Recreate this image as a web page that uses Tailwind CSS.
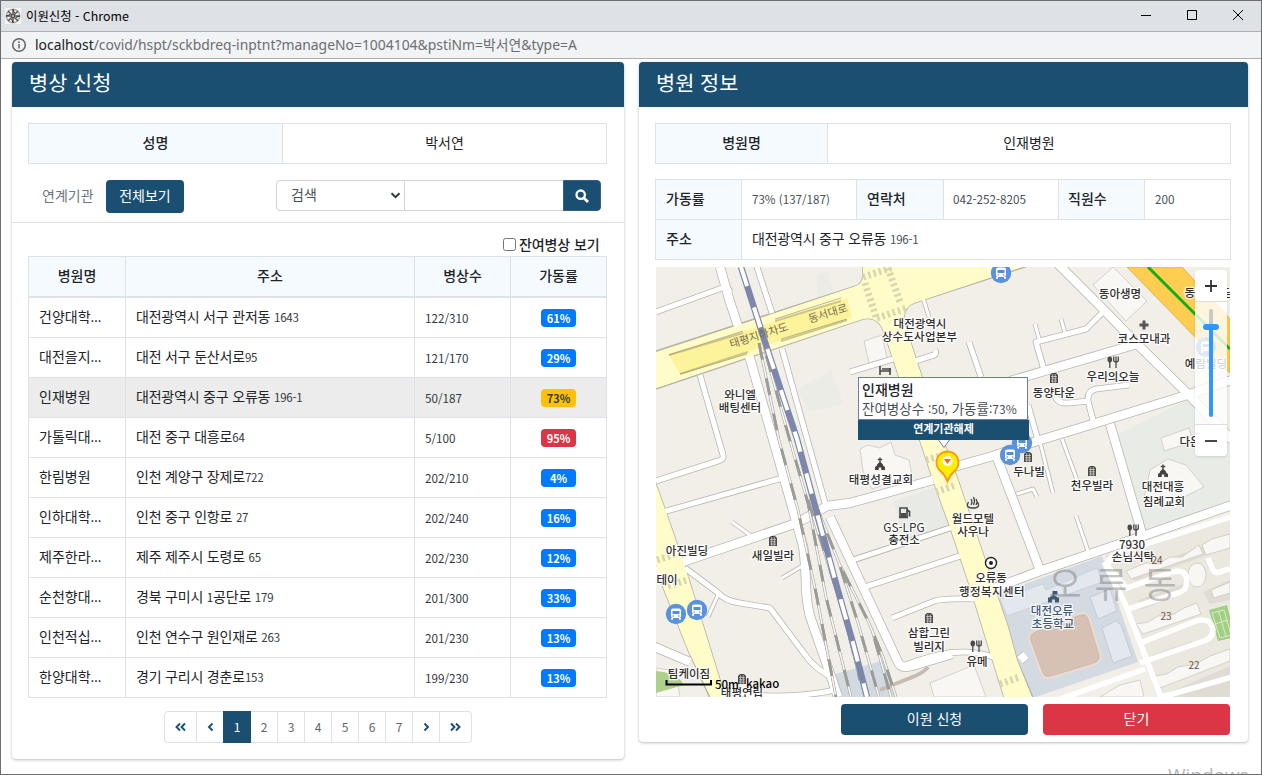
<!DOCTYPE html>
<html lang="ko">
<head>
<meta charset="utf-8">
<title>이원신청</title>
<script src="https://cdn.jsdelivr.net/npm/@tailwindcss/browser@4"></script>
</head>
<body class="w-[1262px] h-[775px] overflow-hidden bg-white font-['Noto_Sans_CJK_KR',sans-serif] text-[14px] leading-5 text-[#212529]">
<div class="relative flex h-[775px] w-[1262px] flex-col overflow-hidden border border-[#6d6d70]">
  <header class="flex h-[31px] shrink-0 items-center border-b border-[#adafb2] bg-[#dee1e6] pl-[4px]">
    <svg class="size-4 bg-[#f5f5f5]" viewBox="0 0 16 16" fill="none" stroke="#555"><circle cx="8" cy="8" r="6.700" stroke="#aaa" stroke-width="1.600"/><path d="M8 1v14M1 8h14M3 3l10 10M13 3 3 13" stroke-width="1.500"/><path d="M8 1.500 9.500 5M8 14.500 6.500 11M1.500 8 5 6.500M14.500 8 11 9.500" stroke="#333"/><circle cx="8" cy="8" r="1.500" fill="#ddd" stroke="#444"/></svg>
    <span class="ml-[5px] text-[12.400px] text-black">이원신청 - Chrome</span>
    <div class="ml-auto flex w-[126px] items-center">
      <svg class="h-[30px] w-[126px]" viewBox="1135 1 126 30" fill="none" stroke="#000"><path d="M1141 15.500h10"/><path d="M1187.500 10.500h9v9h-9z"/><path d="m1233 10 10 10M1243 10l-10 10"/></svg>
    </div>
  </header>
  <div class="flex h-[27px] shrink-0 items-center border-b border-[#acaeb0] bg-[#f1f3f4] pl-[10px]">
    <svg class="size-4" viewBox="0 0 16 16" fill="none" stroke="#5f6368" stroke-width="1.500"><circle cx="8" cy="8" r="6.300"/><path d="M8 7v4.500M8 4.300v1.600"/></svg>
    <span class="ml-[8px] whitespace-nowrap font-['Noto_Sans','Noto_Sans_CJK_KR',sans-serif] text-[13.900px] text-[#6b6e72]"><span class="text-[#202124]">localhost</span>/covid/hspt/sckbdreq-inptnt?manageNo=1004104&amp;pstiNm=박서연&amp;type=A</span>
  </div>

  <main class="flex items-start gap-[15px] pt-[3px] pl-[11px]">
    <section class="h-[697px] w-[612px] rounded bg-white shadow-[0_0_1px_rgba(0,0,0,0.13),0_1px_3px_rgba(0,0,0,0.25)]">
      <h1 class="flex h-[45px] items-center rounded-t bg-[#1b4f72] pb-[5px] pl-[17px] text-[20.800px] text-white">병상 신청</h1>
      <div class="mx-4 mt-4 grid h-[41px] w-[579px] grid-cols-[254px_1fr] border border-[#dee2e6] text-center leading-[36px]">
        <div class="border-r border-[#dee2e6] bg-[#f4fafd] font-medium">성명</div>
        <div>박서연</div>
      </div>
      <div class="mt-4 flex h-[43px] items-start border-b border-[#dee2e6] pl-[30px]">
        <span class="mt-[5px] w-16 text-[#6c757d]">연계기관</span>
        <button class="h-[33px] w-[78px] rounded bg-[#1b4f72] pb-[3px] text-white">전체보기</button>
        <div class="ml-[92px] flex h-[31px]">
          <div class="flex w-[129px] items-center justify-between rounded-l border border-[#ced4da] pr-[3px] pl-[14px] pb-[3px] text-[#495057]">검색
            <svg class="mt-[2px] h-[7px] w-[11px]" viewBox="0 0 11 7" fill="none" stroke="#343a40" stroke-width="2"><path d="m1.500 1.200 4 4 4-4"/></svg></div>
          <div class="w-[158px] border-y border-[#ced4da]"></div>
          <button class="flex w-[38px] items-center justify-center rounded-r border border-[#335f85] bg-[#1b4f72]"><svg class="size-[14px]" viewBox="0 0 14 14" fill="none" stroke="#fff" stroke-width="2.300"><circle cx="5.700" cy="5.700" r="4.200"/><path d="m8.700 8.700 4.300 4.300" stroke-width="2.800"/></svg></button>
        </div>
      </div>
      <div class="flex h-[33px] items-center justify-end gap-[3px] pt-[9px] pr-[25px] font-medium"><span class="size-[13px] rounded-[2.500px] border border-[#767676]"></span><span class="w-[80px] whitespace-nowrap tracking-[-0.100px]">잔여병상 보기</span></div>
      <div id="grid" class="mx-4 w-[579px] border-l border-t border-[#dee2e6]">
        <div class="grid h-[41px] grid-cols-[97px_289px_96px_96px] text-center font-medium leading-[37px]">
          <div class="border-r border-b-2 border-[#dee2e6] bg-[#f4fafd]">병원명</div><div class="border-r border-b-2 border-[#dee2e6] bg-[#f4fafd]">주소</div><div class="border-r border-b-2 border-[#dee2e6] bg-[#f4fafd]">병상수</div><div class="border-r border-b-2 border-[#dee2e6] bg-[#f4fafd]">가동률</div>
        </div>
      </div>
      <nav class="mt-[13px] ml-[152px] flex h-[32px] w-[308px] text-center text-[12px] leading-[31px] text-[#5c6670]">
        <span class="flex w-[33px] items-center justify-center rounded-l border border-[#dee2e6]"><svg class="size-[11px]" viewBox="0 0 11 11" fill="none" stroke="#1b4f72" stroke-width="1.900"><path d="m5 1.500-3.500 3.500 3.500 3.500M10 1.500 6.500 5l3.500 3.500"/></svg></span>
        <span class="flex w-[26px] items-center justify-center border-y border-[#dee2e6]"><svg class="size-[11px]" viewBox="0 0 11 11" fill="none" stroke="#1b4f72" stroke-width="1.900"><path d="M7.500 1.500 4 5l3.500 3.500"/></svg></span>
        <span class="w-[28px] bg-[#1b4f72] text-white">1</span>
        <span class="w-[27px] border-y border-r border-[#dee2e6] leading-[29px]">2</span><span class="w-[27px] border-y border-r border-[#dee2e6] leading-[29px]">3</span><span class="w-[27px] border-y border-r border-[#dee2e6] leading-[29px]">4</span><span class="w-[27px] border-y border-r border-[#dee2e6] leading-[29px]">5</span><span class="w-[27px] border-y border-r border-[#dee2e6] leading-[29px]">6</span><span class="w-[27px] border-y border-r border-[#dee2e6] leading-[29px]">7</span>
        <span class="flex w-[27px] items-center justify-center border-y border-r border-[#dee2e6]"><svg class="size-[11px]" viewBox="0 0 11 11" fill="none" stroke="#1b4f72" stroke-width="1.900"><path d="M3.500 1.500 7 5 3.500 8.500"/></svg></span>
        <span class="flex w-[32px] items-center justify-center rounded-r border border-l-0 border-[#dee2e6]"><svg class="size-[11px]" viewBox="0 0 11 11" fill="none" stroke="#1b4f72" stroke-width="1.900"><path d="M1 1.500 4.500 5 1 8.500M6 1.500 9.500 5 6 8.500"/></svg></span>
      </nav>
    </section>

    <section class="h-[680px] w-[609px] rounded bg-white shadow-[0_0_1px_rgba(0,0,0,0.13),0_1px_3px_rgba(0,0,0,0.25)]">
      <h1 class="flex h-[45px] items-center rounded-t bg-[#1b4f72] pb-[5px] pl-[17px] text-[20.800px] text-white">병원 정보</h1>
      <div class="mx-4 mt-4 grid h-[41px] w-[576px] grid-cols-[172px_1fr] border border-[#dee2e6] text-center leading-[36px]">
        <div class="border-r border-[#dee2e6] bg-[#f4fafd] font-medium">병원명</div>
        <div>인재병원</div>
      </div>
      <div class="mx-4 mt-[15px] w-[576px] border-l border-t border-[#dee2e6] leading-[36px]">
        <div class="grid h-[40px] grid-cols-[86px_115px_87px_115px_86px_86px]">
          <div class="border-r border-b border-[#dee2e6] bg-[#f4fafd] pl-[10px] font-medium">가동률</div><div class="border-r border-b border-[#dee2e6] pl-[10px] text-[11.600px] leading-[38px] text-[#495057]">73% (137/187)</div>
          <div class="border-r border-b border-[#dee2e6] bg-[#f4fafd] pl-[10px] font-medium">연락처</div><div class="border-r border-b border-[#dee2e6] pl-[9px] text-[11.700px] leading-[38px] text-[#495057]">042-252-8205</div>
          <div class="border-r border-b border-[#dee2e6] bg-[#f4fafd] pl-[9px] font-medium">직원수</div><div class="border-r border-b border-[#dee2e6] pl-[10px] text-[11.700px] leading-[38px] text-[#495057]">200</div>
        </div>
        <div class="grid h-[40px] grid-cols-[86px_489px]">
          <div class="border-r border-b border-[#dee2e6] bg-[#f4fafd] pl-[10px] font-medium">주소</div><div class="border-r border-b border-[#dee2e6] pl-[10px] tracking-[-0.200px]">대전광역시 중구 오류동 <span class="text-[11.500px] text-[#495057]">196-1</span></div>
        </div>
      </div>

      <div class="relative mt-[7px] ml-[17px] h-[430px] w-[574px] overflow-hidden bg-[#f2efe9]">
        <svg class="block h-[430px] w-[574px]" viewBox="656 267 574 430">
          <defs>
            <g id="bus"><circle r="10.200" fill="#5b92de"/><rect x="-5" y="-5.500" width="10" height="9.500" rx="2" fill="#fff"/><path d="M-3.500-3h7v3h-7z" fill="#528cdb"/><path d="M-4 4v1.700M4 4v1.700" stroke="#fff" stroke-width="2"/><circle cx="-2.800" cy="2" r=".8" fill="#528cdb"/><circle cx="2.800" cy="2" r=".8" fill="#528cdb"/></g>
            <g id="bld"><path d="M-4 5v-8l2-2h4l2 2v8z" fill="#4a4a4a"/><path d="M-3-1.500h6M-3 .8h6M-3 3.100h6M-1.300-4v9M1.300-4v9" stroke="#f2efe9" stroke-width=".6"/></g>
            <g id="eat"><ellipse cx="-3.200" cy="-2.500" rx="2.300" ry="3" fill="#4a4a4a"/><path d="M-3.200 0v6M3 0v6M.7-5.500V-2q0 2 2.300 2t2.300-2v-3.500M3-5.500V0" fill="none" stroke="#4a4a4a" stroke-width="1.300"/></g>
            <g id="chu"><path d="M0-6.500v5M-2.200-4.500h4.400" stroke="#444" stroke-width="1.300"/><path d="m0-2.500 3 3v1l2 1.500v3H1.200V3.500h-2.400V6H-5V3l2-1.500v-1z" fill="#444"/></g>
            <path id="w3" d="M923 298 929 317M1040 442 1053 493M1062 439 1077 480M1017 494 1033 489 1037 497M1076 516 1088 551M718 595 708 617M732 522 750 535M782 578 804 565M1200 284 1212 271M1035 324 1040 342M1061 319 1065 333"/>
            <path id="w5" d="M656 312 722 288Q728 286 730 292M700 375 723 455Q724 460 718 461L656 481M663 512 786 477M850 372 893 359M912 362 934 355Q937 354 935 350M969 342 981 377M1028 405 1038 440M1044 370 1036 342 1086 329 1103 312M1055 396Q1058 404 1068 403L1089 401M1094 424 1088 401Q1087 391 1096 389L1129 385M853 560 956 526M865 587 960 556M892 618 932 602Q940 598 975 599M685 568 717 592Q725 601 740 603L770 608 803 652Q815 670 834 678M940 655Q965 648 994 657M757 267 772 313M782 349 825 503M720 690Q780 702 835 690M900 667Q930 655 955 652"/>
            <path id="w8" d="M720 267 730 302 740 332M749 355 793 510 803 546Q805 556 806 587 807 610 812 622L838 697M830 517 898 662Q901 669 912 666L952 654M650 573 797 523 827 506 850 503 933 480M950 468 993 456 1037 441 1093 424 1187 395 1232 380M1058 264 1103 309 1137 344 1187 393 1232 440M1010 381 1137 344M1110 424 1143 537M996 455 1040 570M990 590 1040 571 1140 537 1232 505M650 645 690 662M1020 660 1026 655"/>
          </defs>
          <!-- land areas -->
          <path d="m817 275 10-5 8 26-18 4zM797 390l34-20 12 34-34 8z" fill="#ebece6"/>
          <path d="m893 501 47-15 12 38-48 18z" fill="#e8eae6"/>
          <path d="m1117 435 70-35 43 42v62l-85 30z" fill="#e9ebe7"/>
          <path d="m1105 555 125-38v180h-68z" fill="#ebe8df"/>
          <path d="m1130 572 100-35v10l-96 34zM1138 600l45-16 4 8-46 18zM1152 655l40-14 3 6-40 14zM1170 692l60-26v31h-60zM1203 592l27-12v20l-20 4z" fill="#e0dcd3"/>
          <path d="m995 595 107-39 36 106-105 36-16-26z" fill="#d3dae2"/>
          <path d="m1000 599 43-15 3 6 51-22 5 14-95 34z" fill="#e2e8ed" stroke="#c5ced8" stroke-width=".8"/>
          <path d="m1090 597 20-8 7 22-19 8zM1102 628l14-7 5 4 11 31-19 7z" fill="#e2e8ed" stroke="#c3ccd5"/>
          <path d="M1035 632 1080 615Q1086 613 1088 619L1099 655Q1100 661 1094 663L1051 676Q1045 678 1043 673L1031 641Q1029 635 1035 632z" fill="#d6c1b4" stroke="#eadcd3" stroke-width="5"/>
          <path d="M1035 632 1080 615Q1086 613 1088 619L1099 655Q1100 661 1094 663L1051 676Q1045 678 1043 673L1031 641Q1029 635 1035 632z" fill="#d6c1b4" stroke="#cdb7ab" stroke-width=".8"/>
          <g fill="#f8f7f4" stroke="#d0cdc6" stroke-width=".9"><path d="m1093 285 20-18 34 34-21 20zM864 341l18-6 5 23-18 5zM860 449l8-4 12 3 11-6 4 13 14 5 3 15-40 14-9-18zM1161 438l28-10 4 14-29 9zM1150 470l18-11 18 6 18 22-40 20-20-8zM1126 571l20-8 12 1 12-7 12 0 17-12 4 9-72 25zM1136 624l12-2 10-6 14-1 12-7 13-5 4 11-58 20zM1155 676l12-2 11-7 18-3 14-8 20-7v12l-70 27zM1202 545l10-6 18-5v14l-24 7zM1211 590l19-8v11l-16 5zM656 668l20 3 4 26h-24zM930 683l44-18 12 32h-52zM1100 697l20-12 20-5 4 17z"/><ellipse cx="1197" cy="575" rx="9" ry="12"/></g>
          <path d="m656 671 8 1q16 4 20 13l-28 8z" fill="#add18b"/>
          <path d="m1209 610 18-5 8 32-17 4z" fill="#a2cf83"/><path d="m1212 613 12-3 7 25-11 3zM1215 624l13-4M1219 612l7 25" fill="none" stroke="#d8ecc9"/>
          <path d="m835 674 50-14 12 37h-58z" fill="#d2d9e0"/><path d="m880 690 30-12q14-5 18-11" fill="none" stroke="#c8bbb1" stroke-width="4"/>
          <!-- highways -->
          <path d="M1127 267h55l48 52v54z" fill="#ffcd4f" stroke="#d9a64b" stroke-width=".8"/>
          <path d="m1148 267 82 82" stroke="#14ad1c" stroke-width="3"/>
          <!-- apartment lanes -->
          <path d="M1108 567 1127 588 1172 572Q1190 568 1186 586 1185 591 1178 593L1125 610M1108 567Q1108 553 1130 549L1230 517M1140 643 1196 621Q1211 617 1213 630 1213 638 1204 641L1140 663M1060 699 1145 669M1162 697 1232 677M1208 558 1213 570Q1216 575 1225 570L1230 569M1104 562 1125 603 1143 650 1162 700" fill="none" stroke="#fff" stroke-width="5.500"/>
          <!-- street casings and fills -->
          <g fill="none" stroke="#b9b7b2" stroke-linejoin="round"><use href="#w3" stroke-width="4.600"/><use href="#w5" stroke-width="6.600"/><use href="#w8" stroke-width="10"/></g>
          <g fill="#fffcc9" stroke="#b5b3a4" stroke-width="1.600"><path d="M650 353 856 286Q863 283 863 275V262H1040L914 303Q901 308 905 325L917 362 945 445 958 480 980 545 1008 627 1017 660 1034 700H1005L990 652 970 587 950 527 933 480 893 359 884 332Q878 316 863 319L650 391z"/><path d="M650 470 657 487 666 512 685 567 720 680 727 700H711L688 650 663 587 650 545z"/></g>
          <g fill="none" stroke="#fff" stroke-linejoin="round"><use href="#w3" stroke-width="3"/><use href="#w5" stroke-width="5"/><use href="#w8" stroke-width="8.400"/></g>
          <path d="M656 353 856 286Q863 283 863 275V262H1038L914 303Q901 308 905 325L917 362 945 445 958 480 980 545 1008 627 1017 660 1033 700H1005L990 652 970 587 950 527 933 480 893 359 884 332Q878 316 863 319L650 390z" fill="#fffcc9"/>
          <path d="M650 472 657 487 666 512 685 567 720 680 726 700H712L688 650 663 587 650 545z" fill="#fffcc9"/>
          <path d="m669 355 178-57 5 19-172 57z" fill="#fdf39b"/><path d="m669 355 74-22M775 321l66-20M680 374l68-22M781 341l66-21" stroke="#d0c686" stroke-width="2.200"/><path d="m669 355 74-24M775 319l66-21M680 374l67-20M781 339l66-20" stroke="#aaa37c" stroke-width=".8"/>
          <g fill="none" stroke="#d9d5ae" stroke-width="7" stroke-dasharray="2.500 3"><path d="m863 277 28-9M865 283l12 37M877 318l30-10M888 268l12 34M926 460l14-4M936 492l20-7M1000 684l20-7M657 560l22-7M668 586l22-7"/></g>
          <!-- railway side tracks -->
          <g fill="none">
            <path id="tk" d="M759 343 779 440 798 510 816 593 836 697M764 347 786 427 808 503 826 597 851 697M814 500 839 563 858 623 879 697M839 563 869 623 883 657 896 697M808 500 830 570 846 623 860 680M872 630 891 697" stroke="#b8b7b0" stroke-width="2.600"/>
            <use href="#tk"/>
            <path d="M759 343 779 440 798 510 816 593 836 697M764 347 786 427 808 503 826 597 851 697M814 500 839 563 858 623 879 697M839 563 869 623 883 657 896 697M808 500 830 570 846 623 860 680M872 630 891 697" stroke="#fff" stroke-width="1.200"/>
            <path d="M759 343 779 440 798 510 816 593 836 697M814 500 839 563 858 623 879 697M808 500 830 570 846 623 860 680" stroke="#9a9c97" stroke-width="2.800" stroke-dasharray="17 19"/>
            <path d="M764 347 786 427 808 503 826 597 851 697M839 563 869 623 883 657 896 697M872 630 891 697" stroke="#9a9c97" stroke-width="2.800" stroke-dasharray="17 19" stroke-dashoffset="-9"/>
          </g>
          <path d="M741 267 765 342 797 439 818 517 837 587 853 643 867 697" fill="none" stroke="#7d87ac" stroke-width="6.400"/>
          <path d="M741 267 765 342 797 439 818 517 837 587 853 643 867 697" fill="none" stroke="#fff" stroke-width="4" stroke-dasharray="21 22.500" stroke-dashoffset="1"/>
          <!-- symbols -->
          <use href="#bus" x="1001" y="273"/><use href="#bus" x="1022" y="443"/><use href="#bus" x="1010" y="455"/><use href="#bus" x="676" y="614"/><use href="#bus" x="697" y="610"/><use href="#bus" x="1206" y="347"/>
          <use href="#bld" x="1054" y="378"/><use href="#bld" x="1028" y="457"/><use href="#bld" x="1092" y="471"/><use href="#bld" x="929" y="618"/><use href="#bld" x="773" y="541"/><use href="#bld" x="742" y="679"/>
          <use href="#eat" x="1113" y="362"/><use href="#eat" x="1133" y="530"/><use href="#eat" x="976" y="646"/>
          <use href="#chu" x="880" y="464"/><use href="#chu" x="1163" y="471"/>
          <path d="M1144 320.500v9M1139.500 325h9" stroke="#555" stroke-width="3"/>
          <path d="M880 366v9M880 371h11M890 368v7M882 369h9" stroke="#4a4a4a" stroke-width="1.600"/>
          <path d="M900 508h7v9h-7zM899 517.500h9M907 510l2.500 1.500v5" fill="none" stroke="#4a4a4a" stroke-width="1.700"/><path d="M901 513h5v4h-5z" fill="#4a4a4a"/>
          <path d="M968.500 502q-3.500 6 4.500 6t4.500-6M971 505q2-3 0-6M973.500 505q2-4 0-8M976 505q2-3 0-6" fill="none" stroke="#4a4a4a" stroke-width="1.300"/>
          <circle cx="991" cy="563" r="5.500" fill="#fff" stroke="#222" stroke-width="1.400"/><circle cx="991" cy="563" r="2" fill="#222"/>
          <path d="M1053 591v4M1053 591.500h4v2.500h-4" fill="#3e5878" stroke="#3e5878"/><path d="m1053.500 594.500 4 3h1.500v5h-4v-3h-3v3h-4v-5h1.500z" fill="#3e5878"/>
          <!-- labels -->
          <g font-size="36" fill="#777" fill-opacity=".45" text-anchor="middle"><text x="1065" y="598">오</text><text x="1111" y="598">류</text><text x="1160" y="598">동</text></g>
          <g font-size="11.500" font-weight="500" fill="#2f2f2f" stroke="#fff" stroke-opacity=".85" stroke-width="2.600" stroke-linejoin="round" paint-order="stroke" text-anchor="middle">
            <text x="740" y="399">와니엘</text><text x="740" y="412">배팅센터</text>
            <text x="920" y="328">대전광역시</text><text x="919.500" y="341" letter-spacing=".2">상수도사업본부</text>
            <text x="1120" y="298">동아생명</text><text x="1144" y="343">코스모내과</text><text x="1113" y="381">우리의오늘</text><text x="1054" y="397">동양타운</text>
            <text x="1029" y="476">두나빌</text><text x="1092" y="490">천우빌라</text><text x="1163" y="491">대전대흥</text><text x="1164" y="506">침례교회</text>
            <text x="1206" y="368">예람빌딩</text><text x="1209" y="297">동성2빌딩</text><text x="1190" y="446">다온</text>
            <text x="881" y="484" letter-spacing=".15">태평성결교회</text><text x="904" y="531.500" font-size="11.800" font-weight="400">GS-LPG</text><text x="904" y="544">충전소</text>
            <text x="973" y="523">월드모텔</text><text x="973" y="536">사우나</text><text x="991" y="582">오류동</text><text x="992" y="596" letter-spacing=".4">행정복지센터</text>
            <text x="1132" y="549">7930</text><text x="1133" y="561">손님식탁</text><text x="977" y="666">유메</text><text x="929" y="637">삼합그린</text><text x="929" y="651">빌리지</text>
            <text x="773" y="560">새일빌라</text><text x="687" y="555">아진빌딩</text><text x="667" y="584">테이</text><text x="689" y="678">팀케이짐</text><text x="742" y="697">태평연립</text>
            <g fill="#3e5878"><text x="1052" y="615">대전오류</text><text x="1053" y="628">초등학교</text></g>
          </g>
          <g font-size="10" fill="#705447" text-anchor="middle"><text x="1157" y="564">24</text><text x="1166" y="620">23</text><text x="1194" y="669">22</text></g>
          <g font-size="11" fill="#756e52" text-anchor="middle"><text transform="translate(760 339) rotate(-17)">태평지하차도</text><text transform="translate(829 317) rotate(-17)">동서대로</text></g>
          <path d="M666.500 680v4.500h44.500V680" fill="none" stroke="#000" stroke-width="2"/>
          <text x="715" y="689" font-size="11.500" font-weight="500">50m</text><text x="746" y="688" font-size="11.500" font-weight="500">kakao</text>
          <!-- selected hospital pin -->
          <path d="M947.500 481.500q-2-6-7-10.500a11 11 0 1 1 14 0q-5 4.500-7 10.500z" fill="#ffee00" stroke="#f79a1c" stroke-width="1.800"/><circle cx="947.500" cy="461" r="5" fill="#fff"/><path d="M944 459h7l-3.500 5z" fill="#f26a21"/>
        </svg>
        <div class="absolute top-[110px] left-[202px] h-[63px] w-[171px]">
          <div class="h-[43px] w-[170px] border border-[#6b7ca5] bg-white pt-[2px] pl-[3px] leading-[19px]">
            <div class="font-medium">인재병원</div><div class="whitespace-nowrap text-[13.500px] text-[#495057]">잔여병상수 <span class="text-[12px]">:50,</span> 가동률<span class="text-[12px]">:73%</span></div>
          </div>
          <div class="h-5 w-[171px] bg-[#1b4f72] text-center text-[11px] font-bold leading-[17px] text-white">연계기관해제</div>
          <svg class="absolute top-[63px] left-[80px] h-2 w-3" viewBox="0 0 12 8"><path d="M.5 0 6 7.500 11.500 0" fill="#fff" stroke="#6b7ca5"/></svg>
        </div>
        <div class="absolute top-[3px] left-[539px] flex h-[186px] w-8 flex-col rounded shadow">
          <div class="flex h-8 items-center justify-center rounded-t border-b border-[#ddd] bg-white"><svg class="size-3" viewBox="0 0 12 12" stroke="#333" stroke-width="1.800"><path d="M0 6h12M6 0v12"/></svg></div>
          <div class="relative flex grow justify-center bg-white/80"><div class="mt-[7px] h-[108px] w-1 rounded bg-[linear-gradient(#c8c8c8_17px,#3396ff_17px)]"></div><div class="absolute top-[22px] left-2 h-[6px] w-4 rounded-sm bg-[#3396ff]"></div></div>
          <div class="flex h-8 items-center justify-center rounded-b border-t border-[#ddd] bg-white"><svg class="size-3" viewBox="0 0 12 12" stroke="#333" stroke-width="1.800"><path d="M0 6h12"/></svg></div>
        </div>
      </div>
      <div class="mt-[7px] mr-[18px] flex justify-end gap-[15px]">
        <button class="h-[31px] w-[187px] rounded bg-[#1b4f72] pb-[3px] text-white">이원 신청</button>
        <button class="h-[31px] w-[187px] rounded bg-[#dc3545] pb-[3px] text-white">닫기</button>
      </div>
    </section>
  </main>
  <div class="absolute top-[764px] left-[1167px] h-[10px] overflow-hidden font-['Open_Sans',sans-serif] text-[19px] leading-[20px] text-[#b5b5b5]">Windows</div>
</div>
<script>
const rows = [
  ['건양대학…','대전광역시 서구 관저동 ','1643','122/310','61%','b'],
  ['대전을지…','대전 서구 둔산서로','95','121/170','29%','b'],
  ['인재병원','대전광역시 중구 오류동 ','196-1','50/187','73%','y'],
  ['가톨릭대…','대전 중구 대흥로','64','5/100','95%','r'],
  ['한림병원','인천 계양구 장제로','722','202/210','4%','b'],
  ['인하대학…','인천 중구 인항로 ','27','202/240','16%','b'],
  ['제주한라…','제주 제주시 도령로 ','65','202/230','12%','b'],
  ['순천향대…','경북 구미시 1공단로 ','179','201/300','33%','b'],
  ['인천적십…','인천 연수구 원인재로 ','263','201/230','13%','b'],
  ['한양대학…','경기 구리시 경춘로','153','199/230','13%','b']
];
const badge = {b:'bg-[#007bff] text-white', y:'bg-[#ffc107] text-[#343a40]', r:'bg-[#dc3545] text-white'};
const cell = 'border-r border-b border-[#dee2e6] pl-[10px] whitespace-pre';
document.getElementById('grid').insertAdjacentHTML('beforeend', rows.map(r => `
  <div class="grid h-[40px] grid-cols-[97px_289px_96px_96px] leading-[37px] ${r[5] === 'y' ? 'bg-[#ececec]' : ''}">
    <div class="${cell}">${r[0].replace('…', '<span class="font-[\'Open_Sans\',sans-serif] leading-none">…</span>')}</div>
    <div class="${cell} tracking-[-0.200px]">${r[1].replace('1', '<span class="text-[11.500px]">1</span>')}<span class="text-[11.500px] text-[#343a40]">${r[2]}</span></div>
    <div class="${cell} text-[11.700px] leading-[39px] text-[#343a40]">${r[3]}</div>
    <div class="flex items-center justify-center border-r border-b border-[#dee2e6] pt-px"><span class="h-[18px] w-[35px] rounded text-center text-[11px] font-bold leading-[18px] ${badge[r[5]]}">${r[4]}</span></div>
  </div>`).join(''));
</script>
</body>
</html>
